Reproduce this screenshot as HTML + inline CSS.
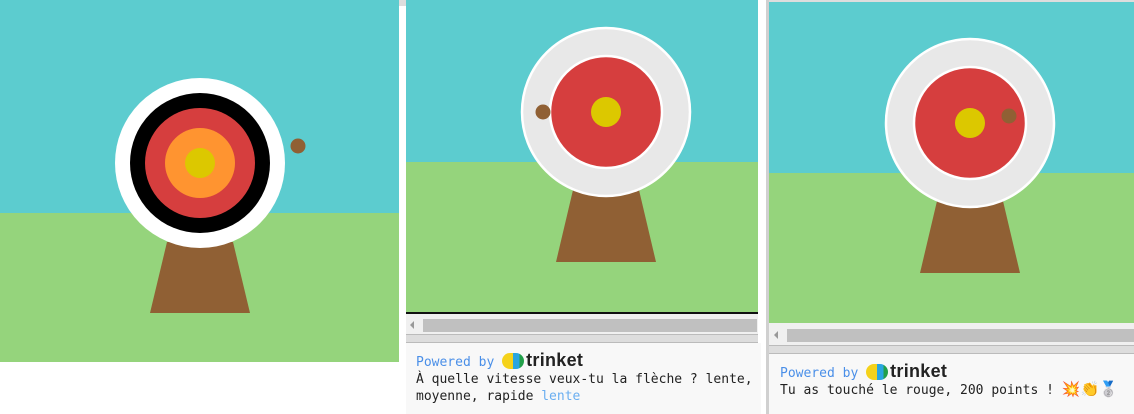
<!DOCTYPE html>
<html><head><meta charset="utf-8"><style>
*{margin:0;padding:0;box-sizing:border-box}
body{width:1134px;height:414px;background:#fff;position:relative;overflow:hidden;font-family:"DejaVu Sans Mono","Liberation Mono",monospace}
.a{position:absolute}
.txt{font-size:13px;line-height:17px;color:#222;white-space:pre}
.pw{color:#4a8fe8}
.logo{display:inline-block;vertical-align:-3px;width:22px;height:16px;border-radius:8px;background:linear-gradient(90deg,#f5d21a 0 50%,#2aa5e0 50% 80%,#22a04a 80%);margin-right:2px}
.tk{font-family:"Liberation Sans",sans-serif;font-weight:bold;font-size:18px;color:#222;letter-spacing:0.3px}
</style></head><body>
<!-- panel 1 -->
<div class="a" style="left:0;top:0;width:399px;height:213px;background:#5ccccf"></div>
<div class="a" style="left:0;top:213px;width:399px;height:149px;background:#95d47c"></div>
<svg class="a" style="left:0;top:0" width="399" height="362">
<polygon points="167,242 233,242 250,313 150,313" fill="#906034"/>
<circle cx="200" cy="163" r="85" fill="#fff"/>
<circle cx="200" cy="163" r="70" fill="#000"/>
<circle cx="200" cy="163" r="55" fill="#d63e3e"/>
<circle cx="200" cy="163" r="35" fill="#ff9430"/>
<circle cx="200" cy="163" r="15" fill="#dcc800"/>
<circle cx="298" cy="146" r="7.5" fill="#906034"/>
</svg>
<div class="a" style="left:399px;top:0;width:7px;height:6px;background:#ddd"></div>
<!-- panel 2 -->
<div class="a" style="left:406px;top:0;width:352px;height:162px;background:#5ccccf"></div>
<div class="a" style="left:406px;top:162px;width:352px;height:150px;background:#95d47c"></div>
<svg class="a" style="left:406px;top:0" width="352" height="312">
<polygon points="167,190 233,190 250,262 150,262" fill="#906034"/>
<circle cx="200" cy="112" r="84" fill="#e8e8e8" stroke="#fff" stroke-width="2.5"/>
<circle cx="200" cy="112" r="56" fill="#d63e3e" stroke="#fff" stroke-width="2.5"/>
<circle cx="200" cy="112" r="15" fill="#dcc800"/>
<circle cx="137" cy="112" r="7.5" fill="#906034"/>
</svg>
<div class="a" style="left:406px;top:312px;width:352px;height:2px;background:#111"></div>
<div class="a" style="left:406px;top:314px;width:352px;height:20px;background:#f0f0f0"></div>
<div class="a" style="left:423px;top:319px;width:334px;height:13px;background:#c0c0c0"></div>
<div class="a" style="left:410px;top:321px;width:0;height:0;border:4px solid transparent;border-right-color:#999;border-left:0"></div>
<div class="a" style="left:406px;top:334px;width:352px;height:9px;background:#ddd;border-top:1px solid #bbb;border-bottom:1px solid #bbb"></div>
<div class="a" style="left:406px;top:343px;width:355px;height:71px;background:#f8f8f8"></div>
<div class="a txt" style="left:416px;top:352px;line-height:17px"><span class="pw">Powered by </span><span class="logo"></span><span class="tk">trinket</span></div>
<div class="a txt" style="left:416px;top:371px;line-height:17px">À quelle vitesse veux-tu la flèche ? lente,
moyenne, rapide <span style="color:#6aaef0">lente</span></div>
<!-- panel 3 -->
<div class="a" style="left:766px;top:0;width:3px;height:414px;background:#d0d0d0"></div>
<div class="a" style="left:769px;top:0;width:365px;height:2px;background:#ddd"></div>
<div class="a" style="left:769px;top:2px;width:365px;height:171px;background:#5ccccf"></div>
<div class="a" style="left:769px;top:173px;width:365px;height:150px;background:#95d47c"></div>
<svg class="a" style="left:769px;top:0" width="365" height="323">
<polygon points="168,201 234,201 251,273 151,273" fill="#906034"/>
<circle cx="201" cy="123" r="84" fill="#e8e8e8" stroke="#fff" stroke-width="2.5"/>
<circle cx="201" cy="123" r="56" fill="#d63e3e" stroke="#fff" stroke-width="2.5"/>
<circle cx="201" cy="123" r="15" fill="#dcc800"/>
<circle cx="240" cy="116" r="7.5" fill="#906034"/>
</svg>
<div class="a" style="left:769px;top:323px;width:365px;height:22px;background:#f0f0f0"></div>
<div class="a" style="left:787px;top:329px;width:347px;height:13px;background:#c0c0c0"></div>
<div class="a" style="left:774px;top:331px;width:0;height:0;border:4px solid transparent;border-right-color:#999;border-left:0"></div>
<div class="a" style="left:769px;top:345px;width:365px;height:9px;background:#ddd;border-top:1px solid #bbb;border-bottom:1px solid #bbb"></div>
<div class="a" style="left:769px;top:354px;width:365px;height:60px;background:#f8f8f8"></div>
<div class="a txt" style="left:780px;top:363px"><span class="pw">Powered by </span><span class="logo"></span><span class="tk">trinket</span></div>
<div class="a txt" style="left:780px;top:381px">Tu as touché le rouge, 200 points ! <span style="font-family:'DejaVu Sans',sans-serif;font-size:15px">💥👏🥈</span></div>
</body></html>
